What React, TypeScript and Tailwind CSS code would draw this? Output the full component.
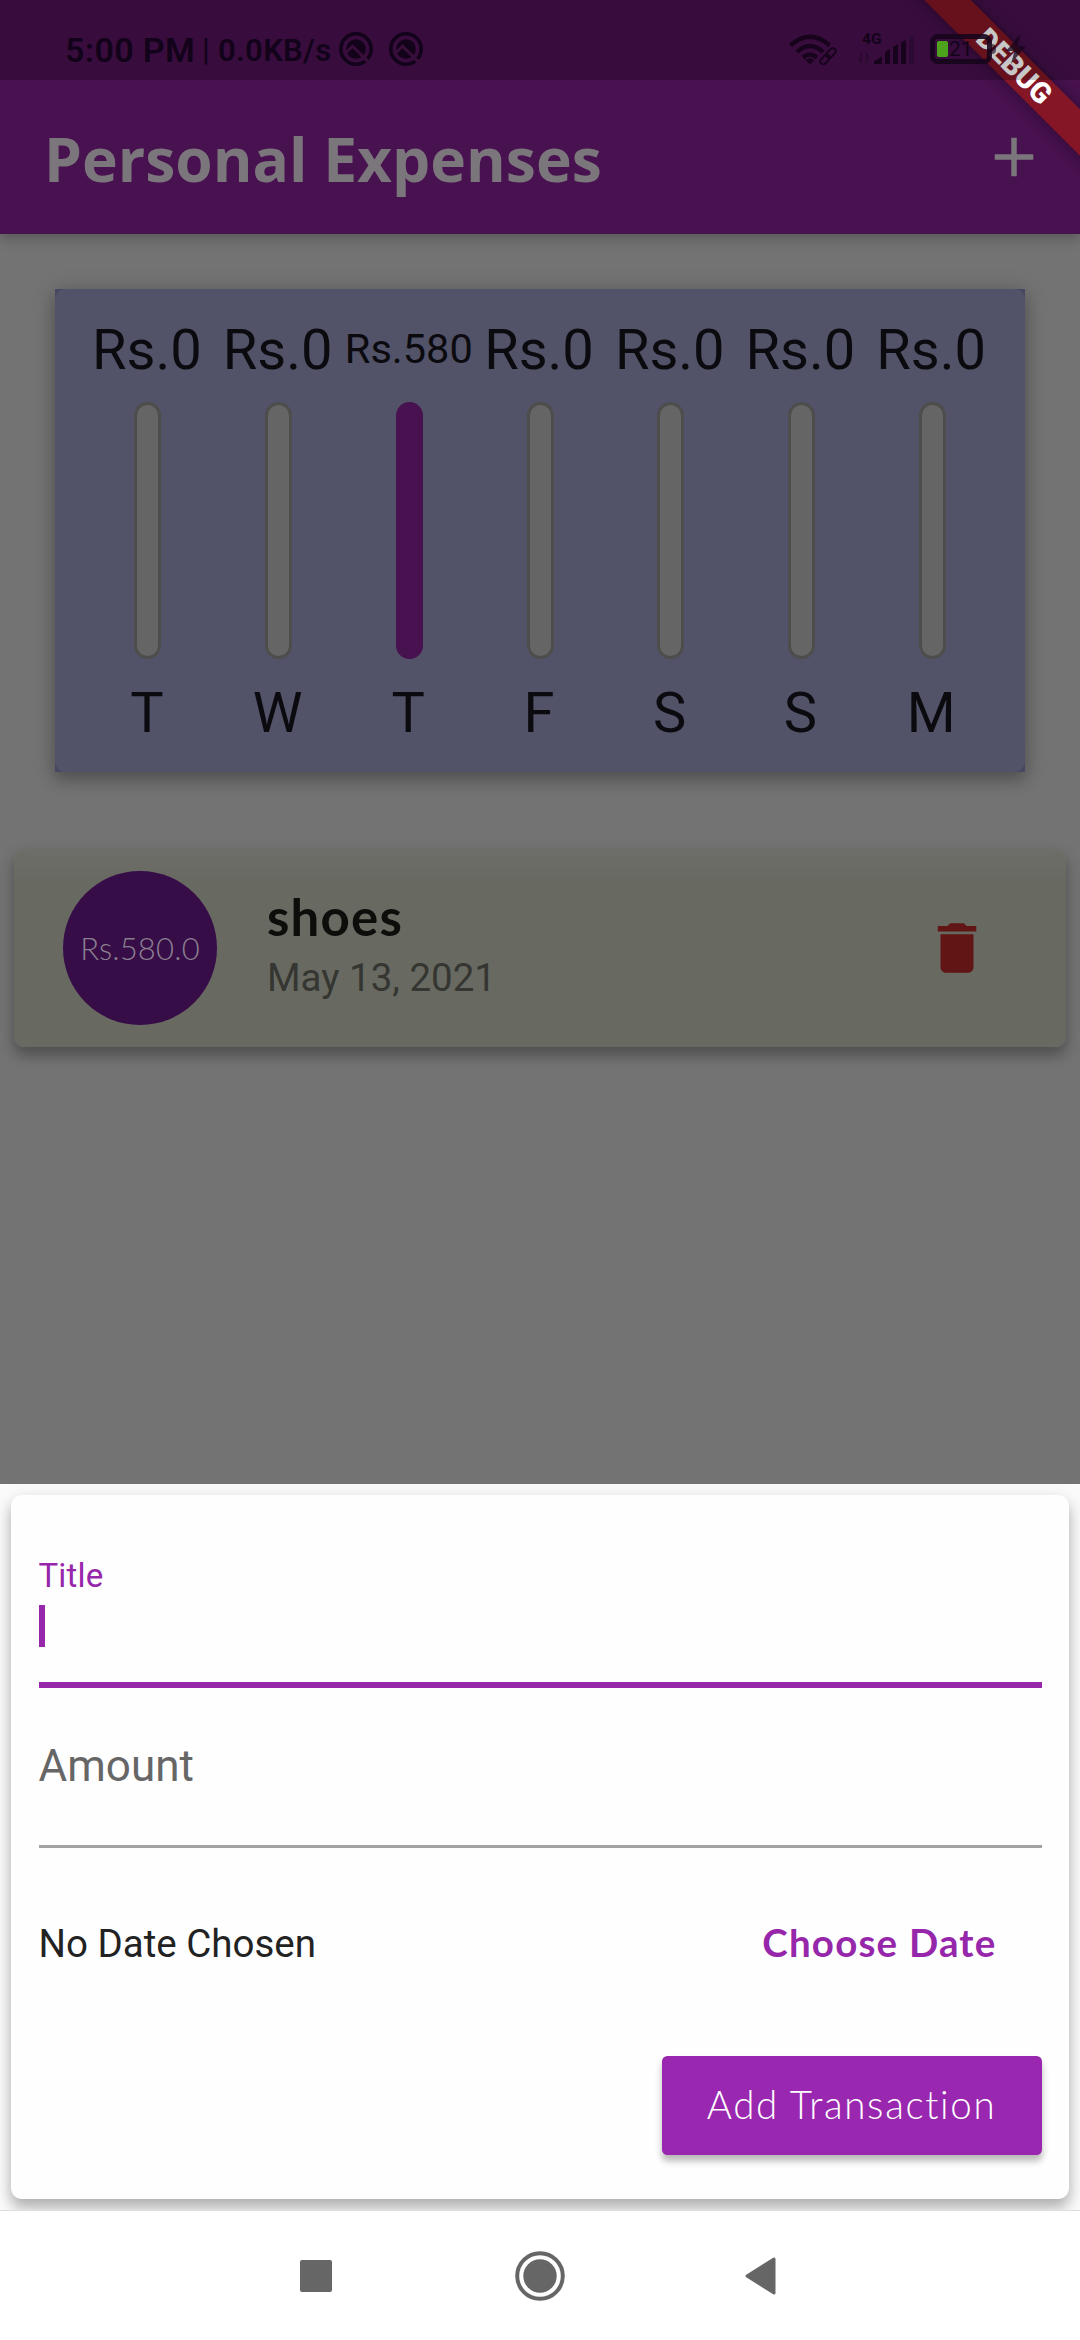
const days = [
  { label: "T", amount: "0", fill: 0 },
  { label: "W", amount: "0", fill: 0 },
  { label: "T", amount: "580", fill: 1 },
  { label: "F", amount: "0", fill: 0 },
  { label: "S", amount: "0", fill: 0 },
  { label: "S", amount: "0", fill: 0 },
  { label: "M", amount: "0", fill: 0 },
];

function QIcon() {
  return (
    <svg width="34" height="34" viewBox="0 0 34 34" fill="none">
      <circle cx="17" cy="17" r="15.2" stroke="#12031a" strokeWidth="3.6" />
      <circle cx="17" cy="17" r="9.8" fill="#12031a" />
      <path d="M7 20.500 13.500 14.200 21 21.500" stroke="#380e3a" strokeWidth="2.8" />
      <path d="M21 21.500 32 32.500" stroke="#380e3a" strokeWidth="3.2" />
    </svg>
  );
}

function StatusBar() {
  return (
    <div className="relative z-20 flex h-20 items-center bg-black/22 pl-[65px] font-['Roboto',sans-serif] font-semibold leading-none text-[#12031a]">
      <span className="mt-[20px] w-[129px] whitespace-nowrap text-[34px] tracking-[0.35px]">5:00 PM</span>
      <span className="ml-[8px] mt-[19px] w-[8px] text-[31px] font-medium">|</span>
      <span className="ml-[8px] mt-[20px] w-[113px] whitespace-nowrap text-[31px] tracking-[0.3px]">0.0KB/s</span>
      <div className="ml-[8px] mt-[18px] flex w-[84px] gap-[16px]">
        <QIcon />
        <QIcon />
      </div>
      <svg className="ml-[366px] mt-[17px]" width="48" height="32" viewBox="788 33 48 32" fill="none">
        <g stroke="#17041c" strokeWidth="4.4">
          <path d="M789.5 45.5Q809 28 828.5 45.5" />
          <path d="M796 52Q809 40 822 52" />
          <path d="M802 57.500Q809 51.500 816 57.500" />
        </g>
        <path d="M809 64.500 804.500 60Q809 56.500 813.500 60Z" fill="#17041c" />
        <g stroke="#17041c" strokeWidth="2">
          <rect x="-5.500" y="-3" width="11" height="6" rx="3" transform="translate(830 53) rotate(-48)" />
          <rect x="-5.500" y="-3" width="11" height="6" rx="3" transform="translate(824 59.500) rotate(-48)" />
        </g>
      </svg>
      <div className="relative ml-[20px] mt-[17px] h-[32px] w-[58px]">
        <span className="absolute left-[5px] top-[-1px] text-[15.500px] font-bold">4G</span>
        <svg width="58" height="32" viewBox="856 32 58 32">
          <path d="M859 51h1.800v12L856 57.500h3zM866.500 63h-1.800V51l4.800 5.500h-3z" fill="#2a0a30" />
          <path d="M873 63v-3l8-4.500V63zM884 63V51l5-3v15zM892 63V46l5-3v20zM900 63V41.500l5-2.500v24z" fill="#17041c" />
          <path d="M908 63V36.500l5-2.500v29z" fill="#2d0a33" />
        </svg>
      </div>
      <div className="ml-[15px] mt-[18px] flex h-[30px] w-[62px] items-center rounded-[8px] border-[5px] border-[#17041c]/90 pl-[2px]">
        <div className="h-[16px] w-[11px] rounded-[2px] bg-[#4da41c]" />
        <span className="ml-px text-[21px] font-normal">21</span>
      </div>
      <div className="mt-[18px] h-[10px] w-[4px] rounded-r bg-[#17041c]/60" />
      <svg className="ml-[10px] mt-[18px]" width="20" height="32" viewBox="0 0 20 32">
        <path d="M14.500 1 0 18h8.500L5 31 19.500 13.500H11z" fill="#17041c" fillOpacity="0.75" />
      </svg>
    </div>
  );
}

function DebugBanner() {
  return (
    <div className="pointer-events-none absolute right-0 top-0 z-10 h-[200px] w-[200px] overflow-hidden">
      <div className="absolute left-[-18px] top-[48px] flex h-[33px] w-[300px] rotate-45 items-center justify-center bg-[#851625] shadow-[0_0_14px_rgba(0,0,0,0.4)]">
        <span className="ml-[6px] font-['Roboto',sans-serif] text-[29px] font-black leading-none text-white">DEBUG</span>
      </div>
    </div>
  );
}

function Chart() {
  return (
    <section className="mx-[55px] mt-[55px] bg-[#474861] shadow-[0_8px_14px_rgba(0,0,0,0.22),0_2px_22px_rgba(0,0,0,0.16)]">
      <div className="flex h-[483px] rounded-[11px] bg-[#525268] px-[27.500px] pt-[27px] text-[#0b0b0f]">
        {days.map((day, i) => (
          <div key={i} className="flex flex-1 flex-col items-center">
            <div className="flex h-[68px] items-center">
              {day.fill ? (
                <span className="mb-[3px] mr-px text-[41.500px] leading-none">Rs.{day.amount}</span>
              ) : (
                <span className="mr-[2px] text-[56px] leading-none">Rs.{day.amount}</span>
              )}
            </div>
            {day.fill > 0 ? (
              <div className="mt-[18px] flex h-[257px] w-[27.500px] flex-col justify-end">
                <div className="rounded-full bg-[#48114f]" style={{ height: `${day.fill * 100}%` }} />
              </div>
            ) : (
              <div className="mt-[18px] h-[257px] w-[27px] rounded-full border-[3px] border-[#4d4d4c] bg-[#656565]" />
            )}
            <span className="mr-[2px] mt-[21px] text-[56px] leading-[66px]">{day.label}</span>
          </div>
        ))}
      </div>
    </section>
  );
}

function TransactionCard() {
  return (
    <section className="mx-[14px] mt-[77px] flex h-[198px] items-center rounded-[11px] bg-linear-to-b from-[#6d6e68] to-[#686a62] to-15% pl-[49px] shadow-[0_9px_14px_rgba(0,0,0,0.26),0_4px_16px_rgba(0,0,0,0.08)]">
      <div className="flex h-[154px] w-[154px] items-center justify-center rounded-full bg-[#370d47]">
        <span className="font-['Lato',sans-serif] text-[31px] font-light leading-none tracking-[0.2px] text-[#8a7f90]">Rs.580.0</span>
      </div>
      <div className="ml-[50px] flex flex-1 flex-col">
        <span className="-mt-[2px] font-['Lato',sans-serif] text-[51px] font-bold leading-[58px] tracking-[1.200px] text-[#0d0d0c]">shoes</span>
        <span className="mt-[3px] text-[38.500px] leading-[58px] text-[#353631]">May 13, 2021</span>
      </div>
      <svg className="mr-[76px]" width="66" height="66" viewBox="0 0 24 24" fill="#611515">
        <path d="M6 19c0 1.100.9 2 2 2h8c1.100 0 2-.9 2-2V7H6v12zM19 4h-3.500l-1-1h-5l-1 1H5v2h14V4z" />
      </svg>
    </section>
  );
}

function NewTransactionSheet() {
  return (
    <section className="h-[726px] overflow-hidden bg-[#fafafa] p-[11px]">
      <div className="flex h-[704px] flex-col rounded-[11px] bg-[#fefefe] px-[27.500px] shadow-[0_10px_14px_rgba(0,0,0,0.22),0_4px_16px_rgba(0,0,0,0.12)]">
        <span className="mt-[61px] text-[33px] leading-[40px] tracking-[0.15px] text-[#9627ab]">Title</span>
        <div className="ml-[0.500px] mt-[9px] h-[42px] w-[6px] bg-[#9627ab]" />
        <div className="mt-[35px] h-[5.500px] bg-[#9627ab]" />
        <span className="mt-[50px] text-[44px] leading-[56px] text-[#666]">Amount</span>
        <div className="mt-[51.500px] h-[3px] bg-[#a3a3a3]" />
        <div className="mt-[66px] flex h-[60px] items-center justify-between pr-[45px]">
          <span className="text-[38.500px] leading-none text-[#222]">No Date Chosen</span>
          <span className="mb-[4px] font-['Lato',sans-serif] text-[38.500px] font-bold leading-none tracking-[1.200px] text-[#9627ab]">Choose Date</span>
        </div>
        <button className="mt-[82px] flex h-[99px] w-[380px] items-center justify-center self-end rounded-[5.500px] bg-[#9a27af] pb-[2px] font-['Lato',sans-serif] text-[38.500px] font-light leading-none tracking-[1.650px] text-white shadow-[0_6px_7px_rgba(0,0,0,0.28)]">
          Add Transaction
        </button>
      </div>
    </section>
  );
}

function NavigationBar() {
  return (
    <nav className="flex h-[130px] items-center border-t border-[#dedede] bg-white pl-[300px]">
      <div className="h-[32px] w-[32px] rounded-[2px] bg-[#666]" />
      <svg className="ml-[183px]" width="50" height="50" viewBox="0 0 50 50">
        <circle cx="25" cy="25" r="22.800" fill="none" stroke="#666" strokeWidth="4" />
        <circle cx="25" cy="25" r="16.700" fill="#666" />
      </svg>
      <svg className="ml-[180px]" width="31" height="38" viewBox="0 0 31 38">
        <path d="M29 2v34L2 19z" fill="#666" stroke="#666" strokeWidth="3" strokeLinejoin="round" />
      </svg>
    </nav>
  );
}

export default function App() {
  return (
    <div className="relative flex h-[2340px] w-[1080px] flex-col overflow-hidden bg-[#737373] font-['Roboto',sans-serif]">
      <header className="bg-[#48114f] shadow-[0_4px_12px_rgba(0,0,0,0.25)]">
        <StatusBar />
        <div className="flex h-[154px] items-center justify-between pl-[44px] pr-[33px]">
          <h1 className="mt-[5px] font-['Open_Sans',sans-serif] text-[60.500px] font-bold leading-none text-[#7b757c]">Personal Expenses</h1>
          <svg width="66" height="66" viewBox="0 0 24 24" fill="#7b757c">
            <path d="M19 13h-6v6h-2v-6H5v-2h6V5h2v6h6v2z" />
          </svg>
        </div>
      </header>
      <DebugBanner />
      <main className="flex-1">
        <Chart />
        <TransactionCard />
      </main>
      <NewTransactionSheet />
      <NavigationBar />
    </div>
  );
}
